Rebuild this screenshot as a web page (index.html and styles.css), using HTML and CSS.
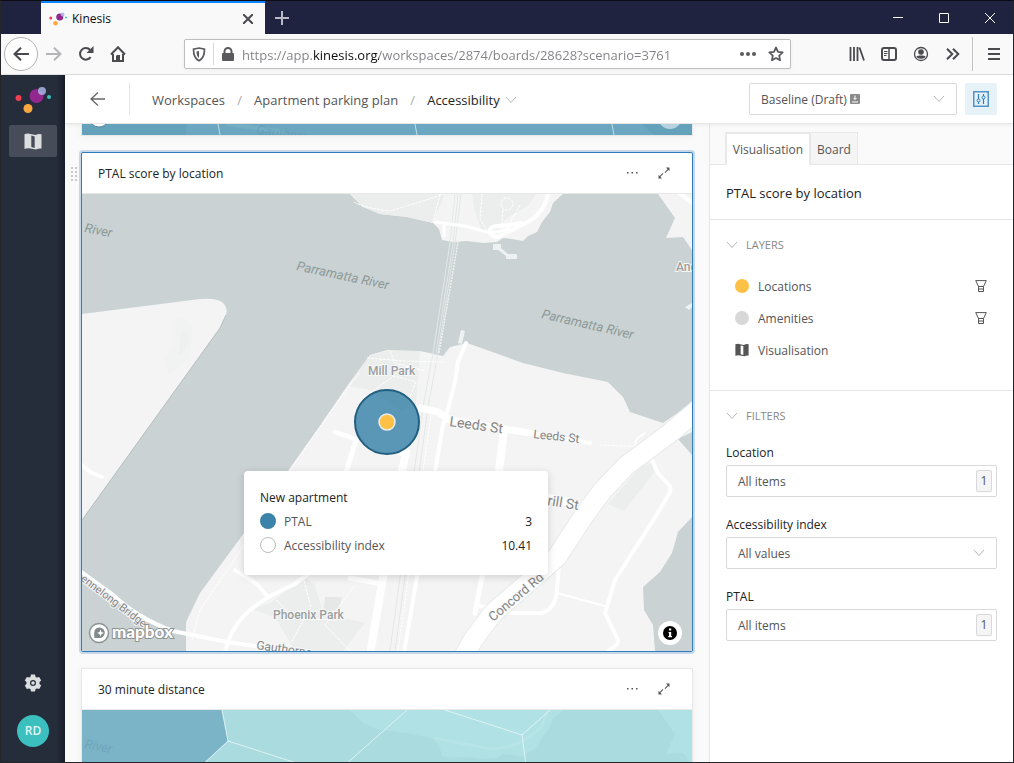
FILE: index.html
```html
<!DOCTYPE html>
<html lang="en">
<head>
<meta charset="utf-8">
<title>Kinesis</title>
<link rel="stylesheet" href="styles.css">
</head>
<body>
<svg class="defs" aria-hidden="true">
  <defs>
    <symbol id="logo" viewBox="0 0 36 26">
      <circle cx="3.500" cy="11" r="3" fill="#ec3f51"/>
      <circle cx="21.500" cy="9" r="7" fill="#92278f"/>
      <circle cx="27" cy="4" r="4" fill="#a9b4e4" opacity=".85"/>
      <circle cx="34" cy="10" r="2" fill="#3bc1c0"/>
      <circle cx="13" cy="21.500" r="4.500" fill="#faa83f"/>
    </symbol>
    <symbol id="map-icon" viewBox="0 0 18 17">
      <path fill-rule="evenodd" d="M.5 1.200q3-1.400 6-.2l5 1q3-1.600 6-.8v14.300q-3-.3-5.500 1l-5.500-1q-3-.8-6 .5zM7.300 2.600v11.400l3.400.9V3.500z"/>
    </symbol>
    <symbol id="chevron" viewBox="0 0 12 8"><path d="M1 1l5 5.500L11 1" fill="none" stroke="currentColor" stroke-width="1"/></symbol>
    <symbol id="more" viewBox="0 0 12 4"><path d="M1 1h1.500v1.500H1zM5.500 1H7v1.500H5.500zM10 1h1.500v1.500H10z" fill="currentColor"/></symbol>
    <symbol id="expand" viewBox="0 0 12 12"><path d="M8 .5h3.500V4l-1.200-1-3 3-.7-.7 3-3zM.5 8l1.200 1 3-3 .7.7-3 3L4 11.500H.5z" fill="currentColor"/></symbol>
    <symbol id="funnel" viewBox="0 0 12 12"><path d="M.7.600h10.600L8.500 6.500v5h-5v-5zM3.500 6.500h5M4 9h4" fill="none" stroke="currentColor"/></symbol>
    <g id="north-land">
      <path d="M350 194l13 13 17 7 27 3 26 6 6 6 3 11 11 2 14-1 16 2 14-1 6-4 9 1 11 2 5-5 9-4 5-10 8-10 3-9 10-9zM658 194l17 24-9 20 17-1 9 13v-56z"/>
    </g>
  </defs>
</svg>
<div class="window">
  <div class="tabstrip">
    <div class="browser-tab">
      <svg class="fav"><use href="#logo"/></svg>
      <span class="tab-title">Kinesis</span>
      <button class="plain" aria-label="Close tab"><svg width="10" height="10"><path d="M0 0l10 10M10 0L0 10" stroke="#4a4a4f" stroke-width="2"/></svg></button>
    </div>
    <button class="plain new-tab" aria-label="New tab"><svg width="14" height="14"><path d="M7 0v14M0 7h14" stroke="#b9bac6" stroke-width="2"/></svg></button>
    <div class="win-buttons">
      <button class="plain" aria-label="Minimise"><svg width="10" height="10"><path d="M0 4.500h10" stroke="#fff"/></svg></button>
      <button class="plain" aria-label="Maximise"><svg width="10" height="10"><path d="M.5.500h9v9h-9z" stroke="#fff" fill="none"/></svg></button>
      <button class="plain" aria-label="Close"><svg width="10" height="10"><path d="M0 0l10 10M10 0L0 10" stroke="#fff"/></svg></button>
    </div>
  </div>

  <div class="toolbar">
    <button class="plain round" aria-label="Back"><svg width="16" height="14" fill="none" stroke="#4a4a4f" stroke-width="2"><path d="M16 7H1.500M8 .7L1.500 7 8 13.300"/></svg></button>
    <div class="nav-icons">
      <button class="plain" aria-label="Forward"><svg width="16" height="14" fill="none" stroke="#b5b5b8" stroke-width="2"><path d="M0 7h14.500M8 .7L14.500 7 8 13.300"/></svg></button>
      <button class="plain" aria-label="Reload"><svg width="16" height="16"><path d="M12.600 11.200A5.800 5.800 0 1 1 12.200 4" fill="none" stroke="#4a4a4f" stroke-width="2"/><path d="M15.500 0v7H8.500z" fill="#4a4a4f"/></svg></button>
      <button class="plain" aria-label="Home"><svg width="16" height="16"><path d="M1 8.500L8 1.300l7 7.200M3 8v7h10V8" fill="none" stroke="#4a4a4f" stroke-width="2"/><path d="M7 9h3v6H6v-5z" fill="#4a4a4f"/></svg></button>
    </div>
    <div class="urlbar">
      <button class="plain shield" aria-label="Tracking protection"><svg width="14" height="15"><path d="M7 1L12.500 2.200c0 6-1 9.300-5.500 11.600C2.500 11.500 1.500 8.200 1.500 2.200z" fill="none" stroke="#5a5a5e" stroke-width="1.700"/><path d="M7 4v7C5 9.500 4.600 7.500 4.500 4.500z" fill="#5a5a5e"/></svg></button>
      <svg class="lock" width="12" height="14"><path d="M2.500 7V4.500a3.500 3.500 0 0 1 7 0V7" fill="none" stroke="#5a5a5e" stroke-width="2"/><rect y="6" width="12" height="8" rx="1" fill="#5a5a5e"/></svg>
      <input class="url" aria-label="Address" value="https://app.kinesis.org/workspaces/2874/boards/28628?scenario=3761">
      <button class="plain" aria-label="Page actions"><svg width="16" height="4" fill="#5a5a5e"><circle cx="2" cy="2" r="2"/><circle cx="8" cy="2" r="2"/><circle cx="14" cy="2" r="2"/></svg></button>
      <button class="plain" aria-label="Bookmark"><svg width="16" height="16"><path d="M8 1.500l2 4.300 4.700.6-3.500 3.200.9 4.700L8 12l-4.100 2.300.9-4.700L1.300 6.400 6 5.800z" fill="none" stroke="#5a5a5e" stroke-width="1.800" stroke-linejoin="round"/></svg></button>
    </div>
    <div class="tool-icons">
      <button class="plain" aria-label="Library"><svg width="16" height="14" stroke="#4a4a4f" stroke-width="1.800"><path d="M1.500 0v14M5 0v14M8.500 0v14M10.500.5L15 13.500"/></svg></button>
      <button class="plain" aria-label="Sidebars"><svg width="16" height="14"><rect x="1" y="1" width="14" height="12" rx="2" fill="none" stroke="#4a4a4f" stroke-width="2"/><path d="M8 1v12" stroke="#4a4a4f" stroke-width="1.500"/><path d="M3 4.500h3.500M3 6.500h3.500M3 8.500h2.500" stroke="#4a4a4f"/></svg></button>
      <button class="plain" aria-label="Account"><svg width="16" height="16"><circle cx="8" cy="8" r="6.500" fill="none" stroke="#4a4a4f" stroke-width="1.300"/><circle cx="8" cy="6" r="2.800" fill="#4a4a4f"/><path d="M3.500 10.500c1.500-1.300 7.500-1.300 9 0-1.200 3-7.800 3-9 0z" fill="#4a4a4f"/></svg></button>
      <button class="plain" aria-label="More tools"><svg width="14" height="12" fill="none" stroke="#4a4a4f" stroke-width="2"><path d="M1 .7L6.300 6 1 11.300M7 .7L12.300 6 7 11.300"/></svg></button>
    </div>
    <button class="plain menu" aria-label="Menu"><svg width="12" height="12" stroke="#4a4a4f" stroke-width="2"><path d="M0 1h12M0 6h12M0 11h12"/></svg></button>
  </div>

  <div class="app">
    <nav class="sidebar">
      <svg class="logo"><use href="#logo"/></svg>
      <a class="side-item" href="#" aria-label="Boards"><svg width="18" height="17"><use href="#map-icon"/></svg></a>
      <button class="plain gear" aria-label="Settings"><svg width="18" height="18" viewBox="0 0 18 18"><path fill="#dcdee0" fill-rule="evenodd" d="M7 .5h4l.6 2.400 1.300.7 2.300-.7 2 3.500-1.700 1.700v1.800l1.700 1.700-2 3.500-2.300-.7-1.300.7-.6 2.400H7l-.6-2.400-1.300-.7-2.300.7-2-3.500 1.700-1.700V8.100L.8 6.400l2-3.500 2.300.7 1.300-.7zM9 6a3 3 0 1 0 0 6 3 3 0 0 0 0-6z"/><circle cx="9" cy="9" r="1.800" fill="#dcdee0"/></svg></button>
      <button class="plain avatar">RD</button>
    </nav>

    <div class="content">
      <header class="header">
        <button class="plain back" aria-label="Back"><svg width="15" height="14" fill="none" stroke="#666" stroke-width="1.300"><path d="M15 7H1M8 .5L1 7l7 6.500"/></svg></button>
        <nav class="crumbs">
          <a href="#">Workspaces</a><span class="slash">/</span><a href="#">Apartment parking plan</a><span class="slash">/</span><a class="current" href="#">Accessibility<svg width="12" height="8"><use href="#chevron"/></svg></a>
        </nav>
        <div class="select-box scenario">
          <select aria-label="Scenario"><option>Baseline (Draft)</option></select>
          <svg class="draft" width="10" height="10"><rect width="10" height="10" rx="1" fill="#8b8b8b"/><path d="M5 1.500v4M3.500 4L5 5.500 6.500 4M2 8h6" stroke="#fff" fill="none"/></svg>
          <svg class="caret" width="12" height="8"><use href="#chevron"/></svg>
        </div>
        <button class="plain tune" aria-label="Settings panel"><svg width="16" height="16" fill="none" stroke="#2e7cbf"><rect x=".75" y=".75" width="14.500" height="14.500" stroke-width="1.500" opacity=".8"/><path d="M5.500 3v5M5.500 11v2M10.500 3v2M10.500 8v5" stroke-width="1.200"/><circle cx="5.500" cy="9.500" r="1.500"/><circle cx="10.500" cy="6.500" r="1.500"/></svg></button>
      </header>

      <div class="body">
        <main class="board">
          <section class="card card-above">
            <svg class="strip" viewBox="82 640 610 11" preserveAspectRatio="xMidYMax slice">
              <path d="M82 640h610v11H82z" fill="#64a1bb"/>
              <path d="M186 640h456l12 11H186z" fill="#6ba7c0"/>
              <path d="M226 640l60 8" stroke="#73aec5" stroke-width="4"/>
              <path d="M218 640l2 11M415 640l2 11M612 640l2 11" stroke="#c3dde6"/>
              <circle cx="99" cy="633" r="10" fill="#fff" stroke="#5f8c9f"/>
              <text x="256" y="650" transform="rotate(8 256 650)" class="lbl zone">Gauthorpe</text>
              <circle cx="670" cy="633" r="12" fill="#b7d3df"/>
            </svg>
          </section>

          <section class="card selected">
            <svg class="grip" width="6" height="14" fill="#c8c8c8"><path d="M0 0h2v2H0zM4 0h2v2H4zM0 4h2v2H0zM4 4h2v2H4zM0 8h2v2H0zM4 8h2v2H4zM0 12h2v2H0zM4 12h2v2H4z"/></svg>
            <div class="card-head"><h2>PTAL score by location</h2>
              <button class="plain" aria-label="More"><svg width="12" height="4"><use href="#more"/></svg></button>
              <button class="plain" aria-label="Expand"><svg width="12" height="12"><use href="#expand"/></svg></button>
            </div>
            <div class="map">
              <svg class="map-art" viewBox="82 194 610 457" preserveAspectRatio="xMidYMid slice">
                <path d="M82 194h610v457H82z" fill="#cad2d3"/>
                <g fill="#f4f4f4">
                  <path d="M82 314l118-15q18-1 23 4 5 5 3 12l-6 13L82 520z"/>
                  <path d="M226 315l-6 13L82 520" fill="none" stroke="#aab6b7" stroke-width=".8"/>
                  <use href="#north-land"/>
                  <path d="M186 651v-29l14-29 44-60 44-62 29-41 33-48 20-27 17-5 33 1 23 5 7-9 17-4 56 20 40 10 45 9 15 15 7 15 33 11 29-20v248z"/>
                </g>
                <g fill="#eceeed">
                  <path d="M350 194l13 13 17 7 27 3 26 6 12-29zM472 194l2 14 8 24 14-4 14-12 18-10 8-12z"/>
                  <path d="M370 356l17-5h33l-4 52-14 8-35-22-17-2 4-10z"/>
                  <path d="M640 467l12-4 2 10-30 38-16-7zM270 603l35-26 10 8 8 28 42 10-22 28h-48l-20-34-23-8z"/>
                  <path d="M175 317l10 1 7 8-2 32-13 10-8 6-4-14 10-14z" fill="#f1f2f2"/><path d="M181 331l7 1v12l-6 10h-3z" fill="#eeefef"/>
                  <path d="M325 597h17l-3 14h-16z" fill="#e6e8e8"/>
                </g>
                <g fill="#cad2d3"><path d="M692 432l-14 7 14 16zM692 517l-14 15-6 21-12 19-17 15 1 23 9 15 2 26h37z"/></g>
                <g fill="none" stroke="#e4e7e7" stroke-width="1">
                  <path d="M455 194l-5 49-17 110-10 54-33 244M461 194l-6 49-17 110-10 54-33 244M458 194l-5 49-17 110"/>
                </g>
                <g fill="none" stroke="#fff" stroke-width="1" stroke-dasharray="3 1">
                  <path d="M354 202q10 6 36 9 20-6 55-17M440 194l-7 28M482 194l-2 26 10 14M367 358l37 3 40 1M390 351l5 12 30 8M360 400l34-24 22 6-8 20M290 470l46-66 24-32M192 640l8-30 30-44 20-30M600 445l45 2 28-15M303 577l8 30-20 36M355 585l-30 40 25 26M276 600l20 18 40 2M432 407l-34 244"/>
                  <circle cx="507" cy="204" r="6"/><path d="M503 210l-2 22M520 205l-10 18" />
                </g>
                <path d="M465 194l-7 48-19 111" fill="none" stroke="#f3f5f5" stroke-width="1.300" stroke-dasharray="2 1"/>
                <g fill="#edf1f1"><path d="M493 244h8v4l7 6h9v5h-11v-3l-8-6h-5zM461 330l4 1-3 13-4-1zM692 303l-7 4 4 3 3-3z"/></g>
                <g fill="none" stroke="#fff" stroke-linejoin="round" stroke-linecap="round">
                  <path d="M435 222l30 4 25 7q8 0 20-5M444 224v12" stroke-width="3"/>
                  <path d="M548 194q-4 20-24 30l-26 13q-8 0-8-6t12-5l20-3" stroke-width="4"/>
                  <path d="M678 192l16 12" stroke-width="4"/>
                  <path d="M82 465l8 7 12 5" stroke-width="4"/>
                  <path d="M420 408l18 4 12 8 80 13" stroke-width="7"/><path d="M530 433l60 10" stroke-width="4"/>
                  <path d="M466 343l-8 19-3 20-8 30-5 18-5 30-20 117-13 76" stroke-width="4"/>
                  <path d="M503 430l-4 41-17 106-7 36" stroke-width="5"/><path d="M504 430l-5 41" stroke-width="8"/>
                  <path d="M406 452l-4 19-19 106-13 78" stroke-width="8"/>
                  <path d="M356 440l-10 32M335 432l20 7M350 578l32 6M400 453l8 2" stroke-width="5"/>
                  <path d="M545 497l42 10" stroke-width="8"/>
                  <path d="M652 460l6 13 11 12q3 4 0 9l-17 28-37 58-10 33 13 27q1 5-10 11" stroke-width="4"/>
                  <path d="M559 563l-2 28q-2 18-15 22l-42 0-22-8" stroke-width="4"/><path d="M557 593l48 13" stroke-width="2"/>
                  <path d="M645 433q-14 8-8 15" stroke-width="2"/>
                  <path d="M80 571l32 23q25 24 61 37l54 11 40 6" stroke-width="4"/>
                  <path d="M225 653q5-25 24-42 16-14 44-26l17-12M235 570l22 14 11 13" stroke-width="4"/>
                  <path d="M700 408l-30 25-43 32-24 25-20 27-26 40-34 30-30 26-20 27-9 16" stroke="#e8ebeb" stroke-width="21"/>
                  <path d="M700 408l-30 25-43 32-24 25-20 27-26 40-34 30-30 26-20 27-9 16" stroke-width="19"/>
                </g>
                <g class="lbl water">
                  <text x="84" y="232" transform="rotate(11 84 232)">River</text>
                  <text x="296" y="270" transform="rotate(12 296 270)">Parramatta River</text>
                  <text x="541" y="318" transform="rotate(13 541 318)">Parramatta River</text>
                </g>
                <g class="lbl">
                  <text x="368" y="375">Mill Park</text>
                  <text x="273" y="619">Phoenix Park</text>
                  <text x="676" y="271">And</text>
                </g>
                <g class="lbl road">
                  <text x="533" y="438" transform="rotate(6 533 438)">Leeds St</text>
                  <text x="256" y="649" transform="rotate(8 256 649)">Gauthorpe</text>
                  <text x="80" y="580" class="small" transform="rotate(37 80 580)">ennelong Bridge</text>
                </g>
                <g class="lbl road big">
                  <text x="449" y="426" transform="rotate(8 449 426)">Leeds St</text>
                  <text x="547" y="505" transform="rotate(9 547 505)">rill St</text>
                  <text x="493" y="622" class="concord" transform="rotate(-40 493 622)">Concord Rd</text>
                </g>
                <circle cx="387" cy="422" r="32" fill="#3b83a8" fill-opacity=".84" stroke="#235f80" stroke-width="2"/>
                <circle cx="387" cy="422" r="8" fill="#ffc145" stroke="#e8eef0" stroke-width="1.500"/>
                <circle cx="99" cy="633" r="9.500" fill="#fff" stroke="#8c9494" stroke-width="1.500"/>
                <path d="M94.500 638c-1-6 0-10.500 5-10.500a5.200 5.200 0 1 1 0 10.500z" fill="#818a8a"/><path d="M100.500 629.500l1 2.500 2.500 1-2.500 1-1 2.500-1-2.500-2.500-1 2.500-1z" fill="#fff"/>
                <text x="112" y="638" class="mapbox">mapbox</text>
              </svg>
              <div class="tip">
                <h3>New apartment</h3>
                <div class="tip-row"><i class="dot ptal"></i><span>PTAL</span><b>3</b></div>
                <div class="tip-row"><i class="dot open"></i><span>Accessibility index</span><b>10.41</b></div>
              </div>
              <button class="plain info" aria-label="Map information"><svg width="14" height="14"><circle cx="7" cy="7" r="7"/><path d="M6 2.500h2.200v2H6zM5.500 6h2.700v4H9v1.200H5.200V10H6V7h-.5z" fill="#fff"/></svg></button>
            </div>
          </section>

          <section class="card">
            <div class="card-head"><h2>30 minute distance</h2>
              <button class="plain" aria-label="More"><svg width="12" height="4"><use href="#more"/></svg></button>
              <button class="plain" aria-label="Expand"><svg width="12" height="12"><use href="#expand"/></svg></button>
            </div>
            <div class="map">
              <svg class="map-art" viewBox="82 710 610 457" preserveAspectRatio="xMidYMid slice">
                <path d="M82 710h610v457H82z" fill="#aadbdf"/>
                <use href="#north-land" transform="translate(0 516)" fill="#b0e1e4"/>
                <path d="M435 738l55 11q30 0 52-23l6-16" fill="none" stroke="#b7e5e7" stroke-width="3"/>
                <path d="M82 710h140l6 31-23 21-60 60H82z" fill="#7bb3c7"/>
                <path d="M222 710l6 31-60 56M228 741l90 29M407 710l-70 62M445 710l77 25 28-25M522 735l8 60" fill="none" stroke="#e0f2f3"/>
                <text x="84" y="748" transform="rotate(11 84 748)" class="lbl zone">River</text>
              </svg>
            </div>
          </section>
        </main>

        <aside class="panel">
          <div class="tabs" role="tablist">
            <button class="plain tab active" role="tab" aria-selected="true">Visualisation</button>
            <button class="plain tab" role="tab" aria-selected="false">Board</button>
          </div>
          <h1 class="panel-title">PTAL score by location</h1>
          <section class="group layers">
            <h2 class="group-head"><svg width="12" height="8"><use href="#chevron"/></svg>LAYERS</h2>
            <div class="layer"><i class="swatch yellow"></i><span>Locations</span><button class="plain" aria-label="Filter locations"><svg width="12" height="12"><use href="#funnel"/></svg></button></div>
            <div class="layer"><i class="swatch grey"></i><span>Amenities</span><button class="plain" aria-label="Filter amenities"><svg width="12" height="12"><use href="#funnel"/></svg></button></div>
            <div class="layer"><svg width="14" height="14" fill="#555"><use href="#map-icon"/></svg><span>Visualisation</span></div>
          </section>
          <section class="group filters">
            <h2 class="group-head"><svg width="12" height="8"><use href="#chevron"/></svg>FILTERS</h2>
            <div class="field"><label for="loc">Location</label><button id="loc" class="plain picker">All items<span class="count">1</span></button></div>
            <div class="field"><label for="acc">Accessibility index</label>
              <div class="select-box"><select id="acc"><option>All values</option></select><svg class="caret" width="12" height="8"><use href="#chevron"/></svg></div></div>
            <div class="field"><label for="ptal">PTAL</label><button id="ptal" class="plain picker">All items<span class="count">1</span></button></div>
          </section>
        </aside>
      </div>
    </div>
  </div>
</div>
</body>
</html>
```

FILE: styles.css
```css
* { box-sizing: border-box; }
body { margin: 0; font: 12px/20px "Open Sans", "Noto Sans", sans-serif; color: #555; }
svg { display: block; flex: none; }
h1, h2, h3 { margin: 0; font-weight: 400; }
a { color: inherit; text-decoration: none; }
.defs { position: absolute; width: 0; height: 0; }
.plain { display: flex; align-items: center; justify-content: center; padding: 0; border: 0; background: none; font: inherit; color: inherit; }

.window { display: flex; flex-direction: column; height: 100vh; border: 1px solid #25252a; border-top-color: #0c0c12; background: #f9f9fa; overflow: hidden; }

.tabstrip { display: flex; flex: none; height: 33px; padding-left: 40px; background: #20233f; }
.browser-tab { display: flex; align-items: center; width: 224px; padding: 0 12px 0 8px; border-top: 2px solid #0a84ff; background: #f9f9fa; color: #0c0c0d; }
.fav { width: 18px; height: 14px; }
.tab-title { flex: 1; margin-left: 5px; }
.new-tab { width: 34px; }
.win-buttons { display: flex; margin-left: auto; }
.win-buttons .plain { width: 46px; }

.toolbar { display: flex; flex: none; align-items: center; height: 41px; padding: 0 11px 0 3px; border-bottom: 1px solid #e0e0e1; }
.round { width: 34px; height: 34px; border: 1px solid #b3b3b3; border-radius: 50%; background: #fff; }
.nav-icons, .tool-icons { display: flex; }
.nav-icons .plain, .tool-icons .plain { width: 32px; height: 32px; }
.urlbar { display: flex; flex: 1; align-items: center; height: 30px; margin: 0 50px; padding-right: 6px; border: 1px solid #bebebe; border-radius: 2px; background: #fff; box-shadow: 0 1px 4px #0000000d; gap: 12px; }
.shield { width: 29px; height: 22px; border-right: 1px solid #d7d7db; }
.lock { margin: 0 -4px 0 -4px; }
.url { flex: 1; min-width: 0; padding: 2px 0 0; border: 0; outline: 0; font: 13px/20px "Open Sans", sans-serif; background: linear-gradient(90deg, #808085 71px, #0c0c0d 71px, #0c0c0d 137px, #808085 137px); background-clip: text; -webkit-background-clip: text; -webkit-text-fill-color: transparent; }
.menu { width: 30px; height: 34px; border-left: 1px solid #c4c4c6; padding-left: 12px; margin-left: 3px; }

.app { display: flex; flex: 1; min-height: 0; }
.sidebar { display: flex; flex: none; flex-direction: column; align-items: center; width: 64px; padding: 12px 8px 15px; background: linear-gradient(90deg, #252c3a 56px, #181d27); }
.logo { width: 36px; height: 26px; }
.side-item { display: flex; align-items: center; justify-content: center; width: 48px; height: 32px; margin-top: 12px; border-radius: 2px; background: #464c58; fill: #dcdee0; }
.gear { height: 32px; margin-top: auto; margin-bottom: 16px; }
.avatar { width: 32px; height: 32px; border-radius: 50%; background: #3bbfbf; color: #e2f6f6; font-weight: 600; }

.content { display: flex; flex: 1; flex-direction: column; min-width: 0; background: #fafafa; }
.header { position: relative; display: flex; flex: none; align-items: center; height: 49px; padding: 0 16px; border-bottom: 1px solid #e6e6e6; border-radius: 4px 0 0; background: #fff; box-shadow: 0 1px 4px #00000012; }
.back { width: 49px; height: 32px; padding-right: 16px; border-right: 1px solid #e3e3e3; }
.crumbs { display: flex; flex: 1; margin-left: 22px; padding-top: 2px; font-size: 13px; white-space: nowrap; }
.slash { width: 29px; text-align: center; color: #aaa; }
.current { display: flex; align-items: center; gap: 5px; color: #222; }
.current svg, .caret, .group-head svg { color: #b8b8b8; }
.select-box { position: relative; height: 32px; }
.select-box select { appearance: none; width: 100%; height: 32px; padding: 2px 32px 0 11px; border: 1px solid #d9d9d9; border-radius: 2px; background: #fff; font: inherit; color: #555; }
.caret { position: absolute; right: 12px; top: 12px; }
.draft { position: absolute; left: 101px; top: 11px; }
.scenario { width: 208px; }
.tune { width: 32px; height: 32px; margin-left: 8px; border-radius: 2px; background: #e6f1f8; }

.body { display: flex; flex: 1; min-height: 0; }
.board { display: flex; flex: 1; flex-direction: column; gap: 16px; min-width: 0; padding: 0 16px; overflow: hidden; }
.card { position: relative; flex: none; border: 1px solid #e8e8e8; background: #fff; box-shadow: 0 1px 8px #0000000d; }
.card-above { border-top: 0; }
.strip { width: 100%; height: 11px; }
.selected { border-color: #2e7cb8; border-radius: 2px; box-shadow: 0 0 0 2px #c5d7e8; }
.grip { position: absolute; left: -11px; top: 14px; }
.card-head { display: flex; align-items: center; height: 41px; padding: 0 12px 0 16px; border-bottom: 1px solid #e8e8e8; }
.card-head h2 { flex: 1; padding-top: 2px; font-size: 12px; color: #222; }
.card-head .plain { width: 32px; height: 32px; }
.map { position: relative; }
.map-art { width: 100%; aspect-ratio: 610 / 457; }
.lbl { font: 500 12px Roboto, sans-serif; fill: #9b9e9e; stroke: #f7f8f8; stroke-width: 2px; paint-order: stroke; }
.water { font-size: 13px; font-style: italic; font-weight: 400; fill: #8c9998; stroke: none; }
.road { font-weight: 400; fill: #858585; }
.big { font-size: 14px; }
.small { font-size: 11px; }
.concord { font-size: 13px; }
.zone { fill: #5c8fa5; fill-opacity: .4; stroke: none; font-style: italic; font-weight: 400; font-size: 13px; }
.mapbox { font: 900 17px Lato, sans-serif; fill: #fff; stroke: #8c9494; stroke-width: 2px; paint-order: stroke; }
.tip { position: absolute; left: 162px; top: 277px; width: 304px; padding: 16px 16px 18px; border-radius: 4px; background: #fff; box-shadow: 0 2px 8px #00000026; }
.tip h3 { font-size: 12px; line-height: 22px; color: #222; }
.tip-row { display: flex; align-items: center; height: 24px; }
.tip-row span { flex: 1; padding-top: 2px; }
.tip-row b { padding-top: 2px; font-weight: 400; color: #222; }
.dot { width: 16px; height: 16px; margin-right: 8px; border-radius: 50%; }
.ptal { background: #3b83a8; }
.open { border: 1px solid #bbb; }
.info { position: absolute; right: 10px; bottom: 6px; width: 24px; height: 24px; border-radius: 50%; background: #fff; }

.panel { flex: none; width: 304px; border-left: 1px solid #e6e6e6; background: #fff; }
.tabs { display: flex; align-items: flex-end; height: 41px; padding-left: 15px; border-bottom: 1px solid #e6e6e6; background: #fafafa; }
.tab { width: 47px; height: 32px; padding-top: 2px; border: 1px solid #e8e8e8; border-width: 1px 1px 0 0; background: #f5f5f5; }
.active { width: 86px; height: 33px; margin-bottom: -1px; padding-top: 0; border-width: 2px 2px 0; background: #fff; }
.panel-title { height: 55px; padding: 18px 16px 16px; border-bottom: 1px solid #e6e6e6; font-size: 13px; color: #222; }
.group { padding: 16px; }
.layers { padding-bottom: 24px; border-bottom: 1px solid #e6e6e6; }
.group-head { display: flex; align-items: center; gap: 8px; margin-bottom: 16px; font-size: 11px; line-height: 18px; color: #888; }
.layer { display: flex; align-items: center; height: 32px; padding: 0 10px 0 9px; gap: 9px; }
.layer span { flex: 1; padding-top: 2px; }
.swatch { width: 14px; height: 14px; border-radius: 50%; }
.yellow { background: #ffc145; }
.grey { background: #d8d8d8; }
.field { display: flex; flex-direction: column; gap: 2px; margin-bottom: 16px; }
.field label { padding-top: 2px; color: #222; }
.picker { justify-content: space-between; height: 32px; padding: 2px 4px 0 11px; border: 1px solid #d9d9d9; border-radius: 2px; background: #fff; }
.count { width: 16px; height: 22px; margin-top: -2px; border: 1px solid #d9d9d9; border-radius: 2px; background: #f5f5f5; text-align: center; }
```
